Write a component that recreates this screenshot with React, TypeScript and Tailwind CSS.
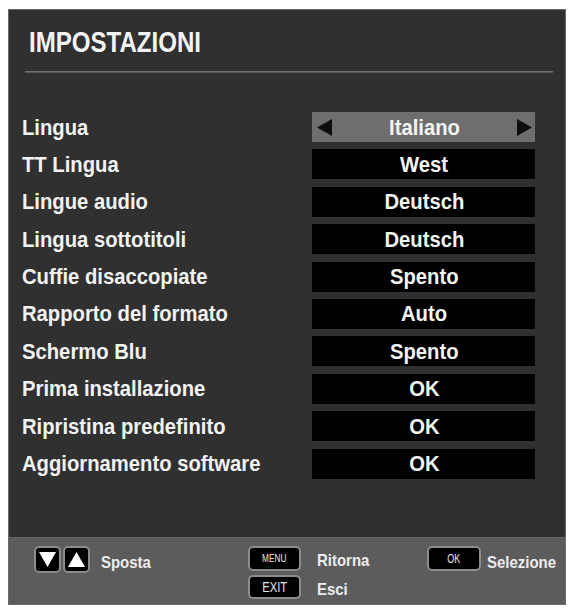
const rows = [
  { label: "Lingua", value: "Italiano", selected: true },
  { label: "TT Lingua", value: "West" },
  { label: "Lingue audio", value: "Deutsch" },
  { label: "Lingua sottotitoli", value: "Deutsch" },
  { label: "Cuffie disaccopiate", value: "Spento" },
  { label: "Rapporto del formato", value: "Auto" },
  { label: "Schermo Blu", value: "Spento" },
  { label: "Prima installazione", value: "OK" },
  { label: "Ripristina predefinito", value: "OK" },
  { label: "Aggiornamento software", value: "OK" },
];

const font = { fontFamily: '"Liberation Sans", Arial, sans-serif' };

function Triangle({ dir, size = 14, className }: { dir: "left" | "right" | "up" | "down"; size?: number; className?: string }) {
  const pts = {
    left: "15,0 15,17 0,8.5",
    right: "0,0 0,17 15,8.5",
    up: "8.5,0 17,15 0,15",
    down: "0,0 17,0 8.5,15",
  }[dir];
  const vb = dir === "left" || dir === "right" ? "0 0 15 17" : "0 0 17 15";
  const w = dir === "left" || dir === "right" ? size * (15 / 17) : size;
  const h = dir === "left" || dir === "right" ? size : size * (15 / 17);
  return (
    <svg width={w} height={h} viewBox={vb} className={className}>
      <polygon points={pts} fill="currentColor" />
    </svg>
  );
}

function KeyCap({ children, className }: { children: React.ReactNode; className: string }) {
  return (
    <div
      className={`flex items-center justify-center bg-black border-2 border-[#8c8c8c] rounded-[5px] text-[#e6e6e6] ${className}`}
    >
      {children}
    </div>
  );
}

export default function App() {
  return (
    <div className="w-[574px] h-[612px] bg-white pt-[9px] pl-[8px]" style={font}>
      <div className="w-[558px] h-[596px] border border-[#6a6a6a] bg-[#303030] flex flex-col">
        {/* Menu body */}
        <div className="h-[527px] flex flex-col">
          <div className="pt-[18px] pl-[20px] h-[47px]">
            <span className="inline-block origin-left scale-x-[0.83] text-[29px] leading-none font-bold text-[#f4f4f4]">
              IMPOSTAZIONI
            </span>
          </div>
          <div className="mt-[14px] ml-[16px] mr-[12px] h-[2px] bg-[#707070] border-b border-[#555]" />

          <div className="mt-[39px] flex flex-col gap-[7.4px]">
            {rows.map((r) => (
              <div key={r.label} className="flex items-center h-[30px]">
                <div className="w-[303px] pl-[13px] text-[22px] font-bold text-[#f2f2f2] whitespace-nowrap">
                  <span className="inline-block origin-left scale-x-[0.92]">{r.label}</span>
                </div>
                <div
                  className={`w-[223px] h-[30px] flex items-center justify-between pl-[5px] pr-[3px] text-[22px] font-bold ${
                    r.selected ? "bg-[#6e6e6e]" : "bg-black"
                  }`}
                >
                  {r.selected ? <Triangle dir="left" size={17} className="text-[#0e0e0e]" /> : <span className="w-[15px]" />}
                  <span className="inline-block scale-x-[0.92] text-[#f4f4f4]">{r.value}</span>
                  {r.selected ? <Triangle dir="right" size={17} className="text-[#0e0e0e]" /> : <span className="w-[15px]" />}
                </div>
              </div>
            ))}
          </div>
        </div>

        {/* Key hints */}
        <div className="h-[67px] bg-[#5c5c5c] border-t border-[#666] flex pt-[8px] pl-[25px] text-[17px] font-bold text-[#ececec]">
          <div className="w-[214px] flex items-start">
            <KeyCap className="w-[27px] h-[27px]">
              <Triangle dir="down" size={17} className="text-white" />
            </KeyCap>
            <KeyCap className="w-[27px] h-[27px] ml-[2px]">
              <Triangle dir="up" size={17} className="text-white" />
            </KeyCap>
            <span className="ml-[11px] mt-[8px] inline-block origin-left scale-x-[0.88] leading-none">Sposta</span>
          </div>

          <div className="w-[179px] flex flex-col gap-[4px]">
            <div className="flex items-center">
              <KeyCap className="w-[53px] h-[25px] text-[11px] font-normal">
                <span className="inline-block scale-x-[0.75]">MENU</span>
              </KeyCap>
              <span className="ml-[16px] mt-[4px] inline-block origin-left scale-x-[0.88] leading-none">Ritorna</span>
            </div>
            <div className="flex items-center">
              <KeyCap className="w-[53px] h-[24px] text-[15px] font-normal">
                <span className="inline-block scale-x-[0.75]">EXIT</span>
              </KeyCap>
              <span className="ml-[16px] mt-[4px] inline-block origin-left scale-x-[0.88] leading-none">Esci</span>
            </div>
          </div>

          <div className="flex items-start">
            <KeyCap className="w-[54px] h-[25px] text-[12px] font-normal">
              <span className="inline-block scale-x-[0.75]">OK</span>
            </KeyCap>
            <span className="ml-[6px] mt-[8px] inline-block origin-left scale-x-[0.88] leading-none">Selezione</span>
          </div>
        </div>
      </div>
    </div>
  );
}
